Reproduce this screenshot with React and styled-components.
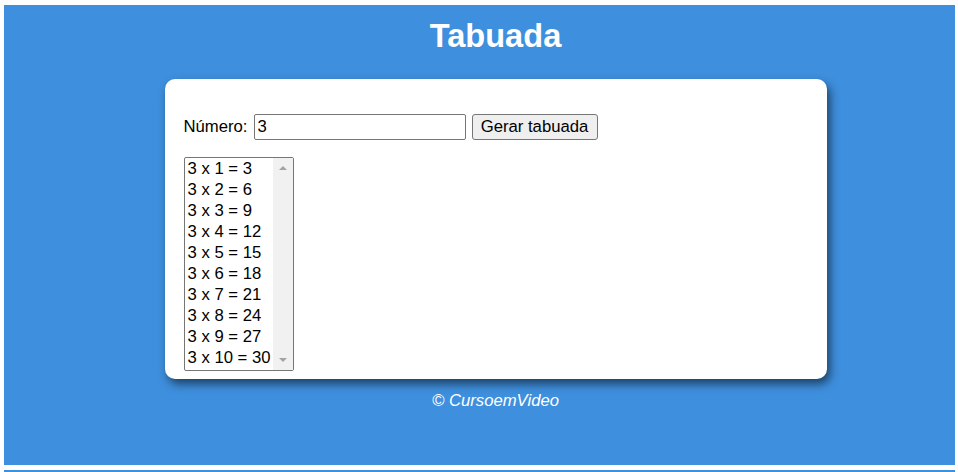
import React from "react";
import styled, { createGlobalStyle } from "styled-components";

const BLUE = "#3e8fde";

const Global = createGlobalStyle`
  html {
    background: #ffffff;
    overflow: hidden;
    height: 100%;
  }
  body {
    margin: 5px 3px 0 4px;
    font-family: "Liberation Sans", Arial, sans-serif;
    font-size: 16.7px;
    color: #000;
  }
`;

const Page = styled.div`
  display: flex;
  flex-direction: column;
  gap: 5px;
`;

const Main = styled.main`
  height: 460px;
  background: ${BLUE};
  display: flex;
  flex-direction: column;
  align-items: center;
  padding: 12px 0 0 32px;
  box-sizing: border-box;
`;

const Title = styled.h1`
  margin: 0;
  font-size: 32.6px;
  line-height: 37px;
  font-weight: bold;
  color: #ffffff;
`;

const Card = styled.section`
  margin-top: 25px;
  width: 662px;
  height: 300px;
  box-sizing: border-box;
  background: #ffffff;
  border-radius: 10px;
  box-shadow: 3px 5px 10px rgba(0, 0, 0, 0.55);
  padding: 35px 19px 8px;
  display: flex;
  flex-direction: column;
  align-items: flex-start;
  gap: 17px;
`;

const Row = styled.div`
  display: flex;
  align-items: center;
`;

const Label = styled.label`
  margin-right: 6px;
  line-height: 20px;
`;

const Input = styled.input`
  width: 212px;
  height: 26px;
  box-sizing: border-box;
  border: 1px solid #767676;
  border-radius: 2px;
  padding: 0 3px;
  font-family: inherit;
  font-size: 16.7px;
  color: #000;
  outline: none;
  margin-right: 6px;
`;

const Button = styled.button`
  width: 126px;
  height: 26px;
  box-sizing: border-box;
  background: #efefef;
  border: 1px solid #767676;
  border-radius: 3px;
  padding: 0;
  font-family: inherit;
  font-size: 16.7px;
  color: #000;
`;

const ListBox = styled.div`
  width: 110px;
  height: 214px;
  box-sizing: border-box;
  border: 1px solid #767676;
  border-radius: 2px;
  display: flex;
  overflow: hidden;
`;

const Options = styled.ul`
  flex: 1;
  margin: 0;
  padding: 0 0 0 3px;
  list-style: none;
  white-space: nowrap;
`;

const Option = styled.li`
  line-height: 21px;
  height: 21px;
`;

const Scrollbar = styled.div`
  width: 20px;
  background: #f1f1f1;
  display: flex;
  flex-direction: column;
  justify-content: space-between;
  align-items: center;
  padding: 8px 0;
  box-sizing: border-box;
`;

const Arrow = styled.span`
  width: 0;
  height: 0;
  border-left: 4px solid transparent;
  border-right: 4px solid transparent;
  ${(p) =>
    p.$down
      ? "border-top: 4px solid #a3a3a3;"
      : "border-bottom: 4px solid #a3a3a3;"}
`;

const Footer = styled.footer`
  margin-top: 12px;
  color: #ffffff;
  font-style: italic;
  line-height: 19px;
`;

const Strip = styled.div`
  height: 20px;
  background: ${BLUE};
`;

export default function App() {
  const n = 3;
  const rows = Array.from({ length: 10 }, (_, i) => `${n} x ${i + 1} = ${n * (i + 1)}`);
  return (
    <>
      <Global />
      <Page>
        <Main>
          <Title>Tabuada</Title>
          <Card>
            <Row>
              <Label htmlFor="num">Número:</Label>
              <Input id="num" type="number" defaultValue="3" />
              <Button>Gerar tabuada</Button>
            </Row>
            <ListBox>
              <Options>
                {rows.map((r) => (
                  <Option key={r}>{r}</Option>
                ))}
              </Options>
              <Scrollbar>
                <Arrow />
                <Arrow $down />
              </Scrollbar>
            </ListBox>
          </Card>
          <Footer>© CursoemVideo</Footer>
        </Main>
        <Strip />
      </Page>
    </>
  );
}
